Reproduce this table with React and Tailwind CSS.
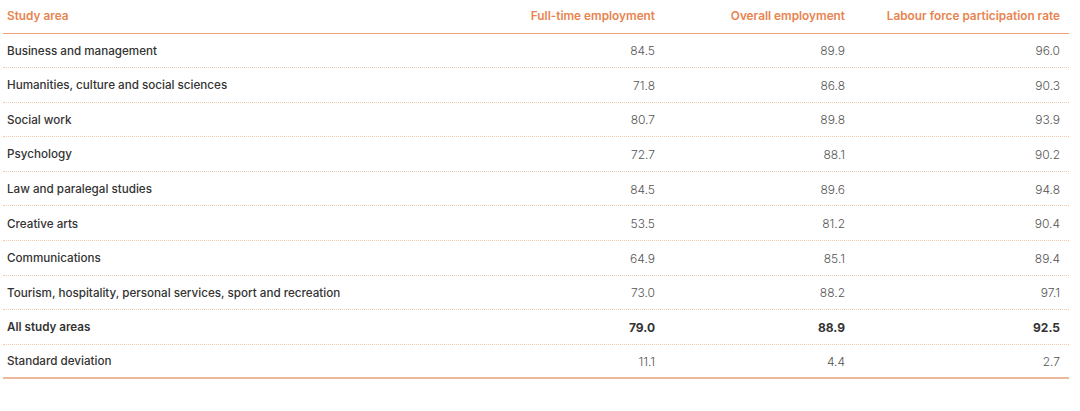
import React from 'react';

const rows = [
    ['Business and management', '84.5', '89.9', '96.0'],
    ['Humanities, culture and social sciences', '71.8', '86.8', '90.3'],
    ['Social work', '80.7', '89.8', '93.9'],
    ['Psychology', '72.7', '88.1', '90.2'],
    ['Law and paralegal studies', '84.5', '89.6', '94.8'],
    ['Creative arts', '53.5', '81.2', '90.4'],
    ['Communications', '64.9', '85.1', '89.4'],
    ['Tourism, hospitality, personal services, sport and recreation', '73.0', '88.2', '97.1'],
];

const cols = 'grid grid-cols-[471px_190px_190px_215px]';

const Row = ({ cells, bold, last }) => (
    <div
        className={`${cols} h-[34.6px] items-center pt-[2px] ${last
                ? 'border-b-2 border-[#e9b99a]'
                : 'border-b border-dotted border-[#f0c7aa]'
            }`}
    >
        <div className={`pl-1 text-[11.65px] text-[#333] ${bold ? 'font-semibold' : 'font-medium'}`}>{cells[0]}</div>
        {cells.slice(1).map((v, i) => (
            <div
                key={i}
                className={`pr-[9px] text-right text-[12px] ${bold ? 'font-bold text-[#333]' : 'font-light text-[#555]'}`}
            >
                {v}
            </div>
        ))}
    </div>
);

export default function App() {
    return (
        <div className="w-[1080px] h-[411px] bg-white pl-[3px] pt-px font-['Inter','Liberation_Sans',sans-serif]">
            <div className="w-[1066px]">
                {/* Header */}
                <div className={`${cols} h-[32.5px] items-center border-b-[1.5px] border-[#eca27a] text-[11.8px] font-semibold text-[#e8844f]`}>
                    <div className="pl-1">Study area</div>
                    <div className="pr-[9px] text-right">Full-time employment</div>
                    <div className="pr-[9px] text-right">Overall employment</div>
                    <div className="pr-[9px] text-right">Labour force participation rate</div>
                </div>

                {rows.map((r) => (
                    <Row key={r[0]} cells={r} />
                ))}
                <Row cells={['All study areas', '79.0', '88.9', '92.5']} bold />
                <Row cells={['Standard deviation', '11.1', '4.4', '2.7']} last />
            </div>
        </div>
    );
}
